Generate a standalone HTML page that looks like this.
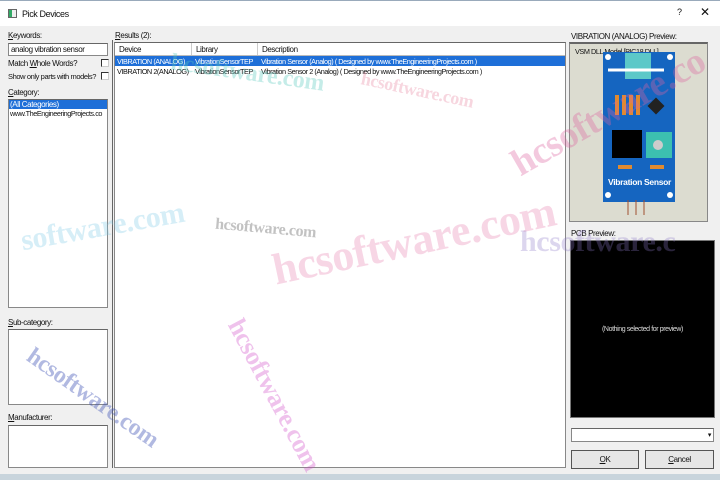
<!DOCTYPE html>
<html><head><meta charset="utf-8"><style>
*{box-sizing:border-box;margin:0;padding:0}
body{width:720px;height:480px;overflow:hidden;background:#f0f0f0;font-family:"Liberation Sans",sans-serif;font-size:8px;color:#111;position:relative;letter-spacing:-0.4px}
.a{position:absolute}
.box{position:absolute;background:#fff;border:1px solid #888;border-top-color:#666}
.wm{position:absolute;font-family:"Liberation Serif",serif;font-weight:bold;white-space:nowrap;pointer-events:none}
.r{font-size:7.3px;letter-spacing:-0.45px}
</style></head><body>
<div class="a" style="left:0;top:0;width:720px;height:26px;background:#fff;border-top:1px solid #9ab"></div>
<div class="a" style="left:8px;top:9px;width:9px;height:9px;border:1px solid #666;background:#eee"><div style="width:3px;height:7px;background:#3a6"></div></div>
<div class="a" style="left:22px;top:9px;font-size:9px">Pick Devices</div>
<div class="a" style="left:677px;top:7px;font-size:9px">?</div>
<div class="a" style="left:700px;top:5px;font-size:12px">✕</div>

<div class="a" style="left:8px;top:31px"><u>K</u>eywords:</div>
<div class="box" style="left:8px;top:43px;width:100px;height:13px;padding:1px 2px">analog vibration sensor</div>
<div class="a" style="left:8px;top:59px">Match <u>W</u>hole Words?</div>
<div class="a" style="left:101px;top:59px;width:8px;height:8px;border:1px solid #333;border-right-color:#ccc;border-bottom-color:#ccc;background:#fff"></div>
<div class="a" style="left:8px;top:72px;font-size:7.5px">Show only parts with models?</div>
<div class="a" style="left:101px;top:72px;width:8px;height:8px;border:1px solid #333;border-right-color:#ccc;border-bottom-color:#ccc;background:#fff"></div>
<div class="a" style="left:8px;top:88px"><u>C</u>ategory:</div>
<div class="box" style="left:8px;top:99px;width:100px;height:209px">
<div style="background:#1e6fd8;color:#fff;height:9px;padding-left:1px;width:98px">(All Categories)</div>
<div class="r" style="padding-left:1px;white-space:nowrap;overflow:hidden">www.TheEngineeringProjects.co</div></div>
<div class="a" style="left:8px;top:318px"><u>S</u>ub-category:</div>
<div class="box" style="left:8px;top:329px;width:100px;height:76px"></div>
<div class="a" style="left:8px;top:413px"><u>M</u>anufacturer:</div>
<div class="box" style="left:8px;top:425px;width:100px;height:43px"></div>
<div class="a" style="left:112px;top:40px;width:1px;height:428px;background:#666"></div>

<div class="a" style="left:115px;top:31px"><u>R</u>esults (2):</div>
<div class="box" style="left:114px;top:42px;width:452px;height:426px">
<div style="height:13px;border-bottom:1px solid #bbb;position:relative">
<span class="a" style="left:4px;top:2px">Device</span><span class="a" style="left:76px;top:0;width:1px;height:12px;background:#ccc"></span>
<span class="a" style="left:81px;top:2px">Library</span><span class="a" style="left:142px;top:0;width:1px;height:12px;background:#ccc"></span>
<span class="a" style="left:147px;top:2px">Description</span></div>
<div class="r" style="background:#1e6fd8;color:#fff;height:10px;position:relative;white-space:nowrap">
<span class="a" style="left:2px;top:1px">VIBRATION (ANALOG)</span><span class="a" style="left:80px;top:1px">VibrationSensorTEP</span><span class="a" style="left:146px;top:1px">Vibration Sensor (Analog) ( Designed by www.TheEngineeringProjects.com )</span></div>
<div class="r" style="height:10px;position:relative;white-space:nowrap">
<span class="a" style="left:2px;top:1px">VIBRATION 2(ANALOG)</span><span class="a" style="left:80px;top:1px">VibrationSensorTEP</span><span class="a" style="left:146px;top:1px">Vibration Sensor 2 (Analog) ( Designed by www.TheEngineeringProjects.com )</span></div>
</div>

<div class="a" style="left:571px;top:32px">VIBRATION (ANALOG) Preview:</div>
<div class="a" style="left:569px;top:42px;width:139px;height:180px;background:#dcdcd0;border:1px solid #888;border-top:2px solid #666"></div>
<div class="a r" style="left:575px;top:47px">VSM DLL Model [PIC18.DLL]</div>
<svg class="a" style="left:600px;top:50px" width="80" height="165" viewBox="0 0 80 165">
<rect x="3" y="2" width="72" height="150" fill="#1565c0"/>
<circle cx="8" cy="7" r="3" fill="#fff"/><circle cx="70" cy="7" r="3" fill="#fff"/><circle cx="8" cy="145" r="3" fill="#fff"/><circle cx="70" cy="145" r="3" fill="#fff"/>
<rect x="25" y="3" width="26" height="26" fill="#5cc8c8"/>
<line x1="8" y1="20" x2="64" y2="20" stroke="#fff" stroke-width="3"/>
<rect x="15" y="45" width="4" height="20" fill="#e08a30"/><rect x="22" y="45" width="4" height="20" fill="#e08a30"/><rect x="29" y="45" width="4" height="20" fill="#e08a30"/><rect x="36" y="45" width="4" height="20" fill="#e08a30"/>
<rect x="50" y="50" width="12" height="12" fill="#222" transform="rotate(45 56 56)"/>
<rect x="12" y="80" width="30" height="28" fill="#000"/>
<rect x="46" y="82" width="26" height="26" fill="#3cc0b0"/><circle cx="58" cy="95" r="5" fill="#ccc"/>
<rect x="18" y="115" width="14" height="4" fill="#e08a30"/><rect x="50" y="115" width="14" height="4" fill="#e08a30"/>
<text x="8" y="135" fill="#fff" font-size="8.5" font-weight="bold" font-family="Liberation Sans" letter-spacing="-0.3">Vibration Sensor</text>
<line x1="28" y1="150" x2="28" y2="165" stroke="#a05030"/><line x1="36" y1="150" x2="36" y2="165" stroke="#a05030"/><line x1="44" y1="150" x2="44" y2="165" stroke="#a05030"/>
</svg>
<div class="a" style="left:571px;top:229px">PCB Preview:</div>
<div class="a" style="left:570px;top:240px;width:145px;height:178px;background:#000;border:1px solid #777"></div>
<div class="a" style="left:570px;top:326px;width:145px;text-align:center;color:#ddd;font-size:7px">(Nothing selected for preview)</div>
<div class="box" style="left:571px;top:428px;width:143px;height:14px"><span class="a" style="right:2px;top:2px;font-size:7px">▾</span></div>
<div class="a" style="left:571px;top:450px;width:68px;height:19px;border:1px solid #555;background:#e6e6e6;text-align:center;line-height:17px"><u>O</u>K</div>
<div class="a" style="left:645px;top:450px;width:69px;height:19px;border:1px solid #555;background:#e6e6e6;text-align:center;line-height:17px"><u>C</u>ancel</div>
<div class="a" style="left:0;top:474px;width:720px;height:6px;background:#c8d4dc"></div>

<div class="wm" style="left:270px;top:215px;font-size:44px;color:rgba(230,120,170,0.3);transform:rotate(-12deg)">hcsoftware.com</div>
<div class="wm" style="left:500px;top:90px;font-size:38px;color:rgba(220,100,160,0.35);transform:rotate(-30deg)">hcsoftware.co</div>
<div class="wm" style="left:20px;top:210px;font-size:30px;color:rgba(120,200,230,0.3);transform:rotate(-10deg)">software.com</div>
<div class="wm" style="left:170px;top:60px;font-size:24px;color:rgba(90,200,190,0.35);transform:rotate(8deg)">hcsoftware.com</div>
<div class="wm" style="left:215px;top:220px;font-size:16px;color:rgba(120,120,120,0.45);transform:rotate(5deg)">hcsoftware.com</div>
<div class="wm" style="left:190px;top:380px;font-size:26px;color:rgba(210,80,200,0.35);transform:rotate(62deg)">hcsoftware.com</div>
<div class="wm" style="left:15px;top:385px;font-size:24px;color:rgba(60,80,180,0.4);transform:rotate(35deg)">hcsoftware.com</div>
<div class="wm" style="left:360px;top:80px;font-size:18px;color:rgba(230,120,150,0.3);transform:rotate(12deg)">hcsoftware.com</div>
<div class="wm" style="left:520px;top:225px;font-size:30px;color:rgba(140,120,200,0.3)">hcsoftware.c</div>
</body></html>
